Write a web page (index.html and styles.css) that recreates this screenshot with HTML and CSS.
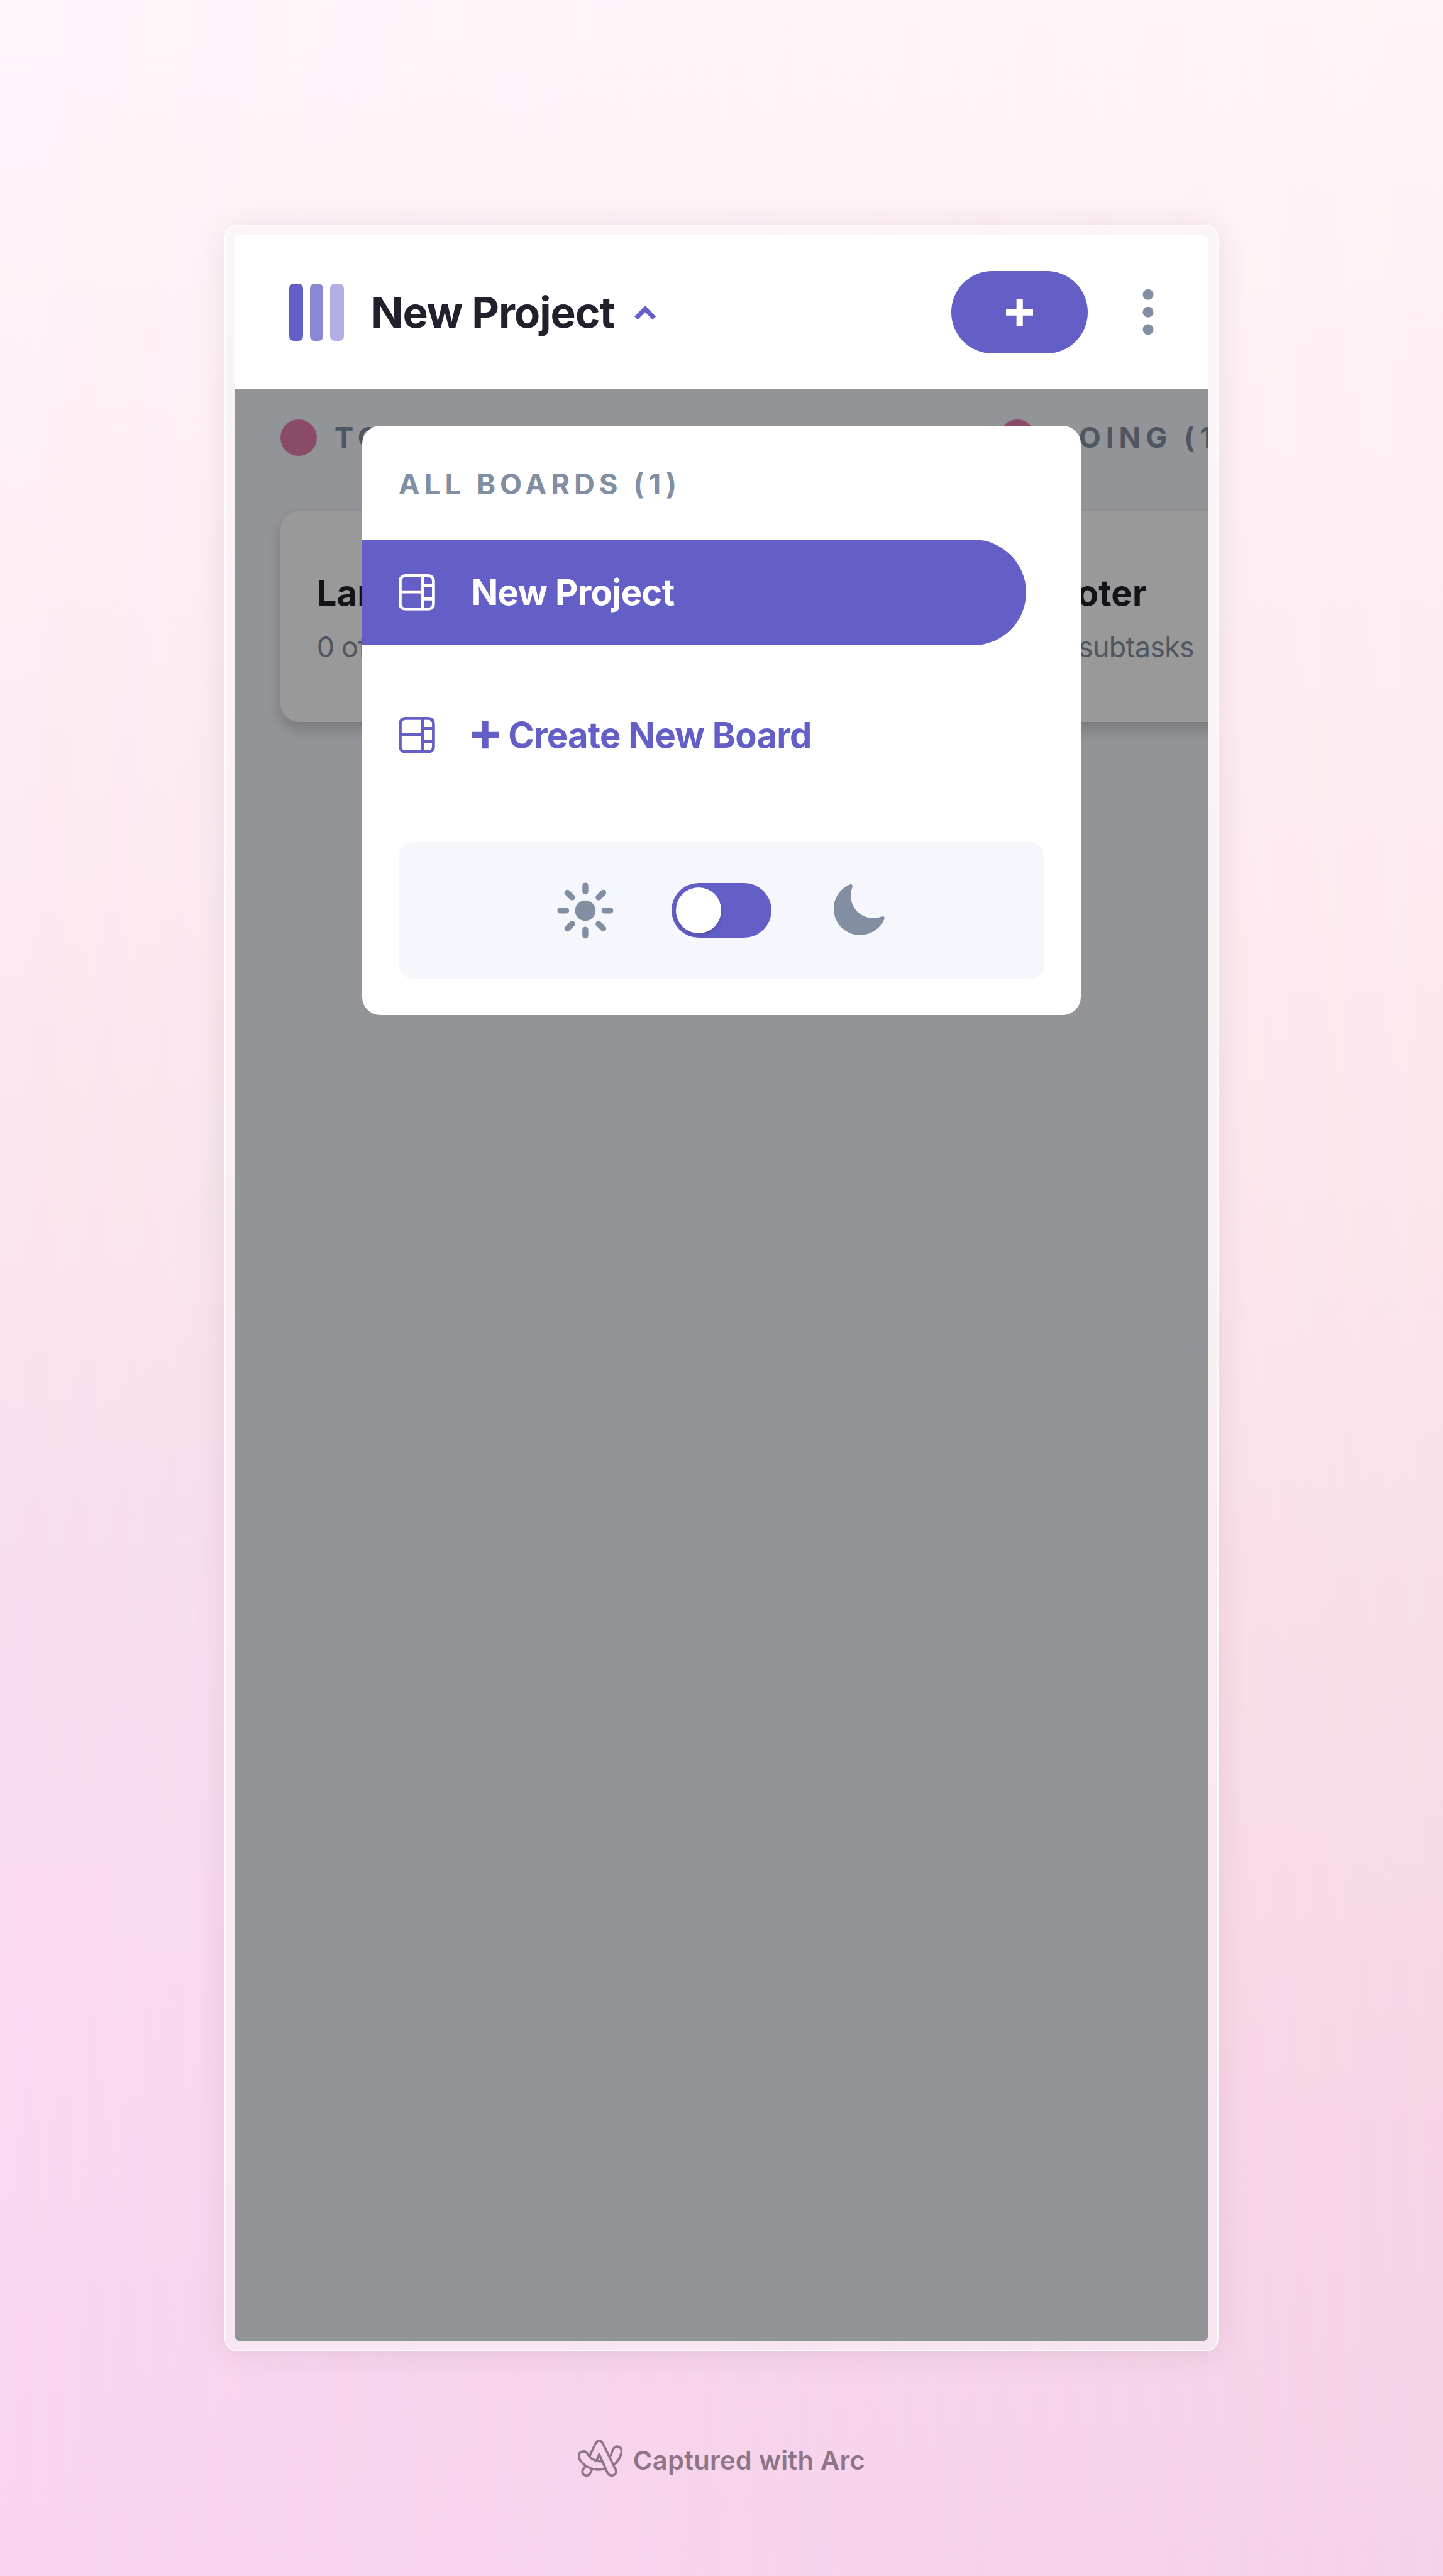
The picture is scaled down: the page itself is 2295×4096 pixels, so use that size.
FILE: index.html
```html
<!DOCTYPE html>
<html lang="en">
<head>
<meta charset="utf-8">
<title>Kanban</title>
<link rel="stylesheet" href="styles.css">
</head>
<body class="page">
<svg width="0" height="0" class="sprites" aria-hidden="true">
  <symbol id="board" viewBox="0 0 16 16"><path d="M0 2.889A2.889 2.889 0 0 1 2.889 0H13.11A2.889 2.889 0 0 1 16 2.889V13.11A2.888 2.888 0 0 1 13.111 16H2.89A2.889 2.889 0 0 1 0 13.111V2.89Zm1.333 5.555v4.667c0 .859.697 1.556 1.556 1.556h6.889V8.444H1.333Zm8.445-1.333V1.333h-6.89A1.556 1.556 0 0 0 1.334 2.89V7.11h8.445Zm4.889-1.333H11.11v4.444h3.556V5.778Zm0 5.778H11.11v3.11h2a1.556 1.556 0 0 0 1.556-1.555v-1.555Zm0-7.112V2.89a1.555 1.555 0 0 0-1.556-1.556h-2v3.111h3.556Z"/></symbol>
  <symbol id="plus" viewBox="0 0 12 12"><path d="M4.600 0h2.800v4.600H12v2.800H7.400V12h-2.800V7.400H0v-2.800h4.600z"/></symbol>
</svg>

<main class="frame">
  <div class="screen">
    <header class="topbar">
      <div class="logo"><span class="logo-bar"></span><span class="logo-bar logo-bar-mid"></span><span class="logo-bar logo-bar-light"></span></div>
      <h1 class="title">New Project</h1>
      <svg class="chevron" viewBox="0 0 10 7"><path d="M9 6 5 2 1 6" fill="none" stroke="currentColor" stroke-width="2"/></svg>
      <button class="add" aria-label="Add task"><svg class="plus"><use href="#plus"/></svg></button>
      <svg class="dots" viewBox="0 0 5 20"><circle cx="2.5" cy="2.308" r="2.350"/><circle cx="2.5" cy="10" r="2.350"/><circle cx="2.5" cy="17.692" r="2.350"/></svg>
    </header>

    <section class="board">
      <div class="columns">
        <div class="column">
          <h2 class="column-head"><span class="dot"></span>TODO (1)</h2>
          <article class="card">
            <h3 class="card-title">Landing page</h3>
            <p class="card-sub">0 of 0 subtasks</p>
          </article>
        </div>
        <div class="column">
          <h2 class="column-head"><span class="dot"></span>DOING (1)</h2>
          <article class="card">
            <h3 class="card-title">Footer</h3>
            <p class="card-sub card-sub-out">0 of 0 subtasks</p>
          </article>
        </div>
      </div>

      <div class="scrim"></div>

      <nav class="menu">
        <h2 class="menu-head">ALL BOARDS (1)</h2>
        <a class="item item-active"><svg class="board-icon"><use href="#board"/></svg><span class="item-text">New Project</span></a>
        <a class="item"><svg class="board-icon"><use href="#board"/></svg><svg class="plus"><use href="#plus"/></svg><span class="item-text item-text-new">Create New Board</span></a>
        <div class="theme">
          <svg class="theme-icon" viewBox="-13.25 -13.25 26.5 26.5">
            <circle r="4.500"/>
            <path fill="none" stroke="currentColor" stroke-width="2.6" stroke-linecap="round" d="M0-11V-8.400M0 8.400V11M-11 0H-8.400M8.400 0H11M-7.900-7.900-5.800-5.800M7.900-7.900 5.800-5.800M-7.900 7.900-5.800 5.800M7.900 7.900 5.800 5.800"/>
          </svg>
          <span class="switch"><span class="knob"></span></span>
          <svg class="theme-icon" viewBox="0 0 24 24"><path d="M9.528 1.718a.75.75 0 0 1 .162.819A8.970 8.970 0 0 0 9 6a9 9 0 0 0 9 9 8.970 8.970 0 0 0 3.463-.69.75.75 0 0 1 .981.98 10.503 10.503 0 0 1-9.694 6.460c-5.799 0-10.500-4.701-10.500-10.500 0-4.368 2.667-8.112 6.460-9.694a.75.75 0 0 1 .818.162Z"/></svg>
        </div>
      </nav>
    </section>
  </div>
</main>

<footer class="credit">
  <svg class="arc" viewBox="45 57 222 184"><path d="M104 137 133 76Q151 47 169 76L233 207Q240 228 220 234 200 238 192 222L151 130 138 160M182 201Q100 220 56 158 42 136 56 122 74 108 90 122 112 165 165 165M83 188 70 206Q62 226 80 234 100 238 106 224L116 203M207 138 219 106Q228 88 246 92 265 98 261 122 252 160 222 184"/></svg>
  <span class="credit-text">Captured with Arc</span>
</footer>
</body>
</html>
```
FILE: styles.css
```css
/* 1rem = 10 units of the 428-unit wide phone screen */
html {
  font-size: 36.1715px;
}

*, *::before {
  box-sizing: border-box;
  margin: 0;
  padding: 0;
}

.page {
  position: relative;
  display: flex;
  flex-direction: column;
  align-items: center;
  height: 4096px;
  padding-top: 9.867rem;
  overflow: hidden;
  font-family: Inter, "Liberation Sans", sans-serif;
  background: linear-gradient(#fff6fb 0%, #fdedf4 25%, #fae4ee 48%, #f9deef 60%, #fadaf1 75%, #f9d4f0 100%);
}

.page::before {
  content: "";
  position: absolute;
  inset: 0;
  background: linear-gradient(#fff4f7 0%, #fdedf2 25%, #fbe7ec 45%, #f9dde7 65%, #f7d5e6 82%, #f5d2e8 100%);
  -webkit-mask-image: linear-gradient(to right, transparent, #000);
  mask-image: linear-gradient(to right, transparent, #000);
}

.sprites {
  position: absolute;
}

svg {
  display: block;
  flex: none;
  fill: currentColor;
}

.frame {
  position: relative;
  padding: 0.403rem;
  border: 2px solid rgba(255, 255, 255, 0.7);
  border-radius: 0.57rem;
  background: rgba(247, 247, 248, 0.52);
  box-shadow: 0 0.1rem 1.4rem rgba(50, 20, 45, 0.09);
}

.screen {
  display: flex;
  flex-direction: column;
  width: 42.8rem;
  height: 92.6rem;
  border-radius: 0.3rem;
  overflow: hidden;
  background: #fff;
}

/* Top bar */
.topbar {
  display: flex;
  align-items: center;
  height: 6.8rem;
  padding: 0 2.4rem;
}

.logo {
  display: flex;
  gap: 0.3rem;
}

.logo-bar {
  width: 0.6rem;
  height: 2.5rem;
  border-radius: 0.2rem;
  background: #635fc7;
}

.logo-bar-mid {
  opacity: 0.75;
}

.logo-bar-light {
  opacity: 0.5;
}

.title {
  margin-left: 1.19rem;
  font-size: 1.87rem;
  font-weight: 700;
  letter-spacing: -0.029rem;
  color: #20212c;
}

.chevron {
  width: 1rem;
  height: 0.7rem;
  margin-left: 0.86rem;
  color: #635fc7;
}

.add {
  display: flex;
  align-items: center;
  justify-content: center;
  width: 6rem;
  height: 3.6rem;
  margin-left: auto;
  border: 0;
  border-radius: 1.8rem;
  background: #635fc7;
  color: #fff;
}

.plus {
  width: 1.2rem;
  height: 1.2rem;
}

.dots {
  width: 0.5rem;
  height: 2rem;
  margin-left: 2.4rem;
  color: #828fa3;
}

/* Board behind the menu */
.board {
  position: relative;
  flex: 1;
  background: #f4f7fd;
}

.columns {
  display: flex;
  gap: 3.6rem;
  padding: 1.12rem 2rem 0;
}

.column {
  flex: none;
  width: 28rem;
}

.column-head,
.menu-head {
  font-size: 1.26rem;
  font-weight: 700;
  line-height: 2rem;
  letter-spacing: 0.192rem;
  color: #828fa3;
}

.column-head {
  display: flex;
  align-items: center;
  gap: 0.78rem;
  margin-bottom: 2.24rem;
  letter-spacing: 0.22rem;
  white-space: nowrap;
}

.dot {
  width: 1.6rem;
  height: 1.6rem;
  border-radius: 50%;
  background: #e67daf;
}

.card {
  height: 9.26rem;
  padding: 2.58rem 1.6rem 0;
  border-radius: 0.8rem;
  background: #fff;
  box-shadow: 0 0.3rem 0.6rem rgba(20, 20, 25, 0.2);
}

.card-title {
  font-size: 1.55rem;
  line-height: 2rem;
  letter-spacing: 0.005rem;
  color: #20212c;
}

.card-sub {
  margin-top: 0.6rem;
  font-size: 1.24rem;
  line-height: 1.6rem;
  letter-spacing: -0.02rem;
  color: #828fa3;
}

.card-sub-out {
  margin-left: -1.78rem;
}

.scrim {
  position: absolute;
  inset: 0;
  background: rgba(0, 0, 0, 0.4);
}

/* Board menu */
.menu {
  position: absolute;
  top: 1.6rem;
  left: 5.6rem;
  display: flex;
  flex-direction: column;
  width: 31.6rem;
  height: 25.9rem;
  padding-top: 1.57rem;
  border-radius: 0.8rem;
  background: #fff;
}

.menu-head {
  margin: 0 1.6rem 1.43rem;
}

.item {
  display: flex;
  align-items: center;
  width: 29.2rem;
  height: 4.64rem;
  margin-bottom: 1.64rem;
  padding-left: 1.6rem;
  border-radius: 0 2.32rem 2.32rem 0;
  color: #635fc7;
}

.item-active {
  background: #635fc7;
  color: #fff;
}

.board-icon {
  width: 1.6rem;
  height: 1.6rem;
  margin-right: 1.6rem;
}

.item-text {
  font-size: 1.55rem;
  font-weight: 700;
  letter-spacing: -0.019rem;
  white-space: nowrap;
}

.item-text-new {
  margin-left: 0.42rem;
}

.theme {
  display: flex;
  align-items: center;
  justify-content: center;
  gap: 2.475rem;
  height: 6rem;
  margin: 0.74rem 1.6rem 0;
  border-radius: 0.6rem;
  background: #f5f7fd;
  color: #828fa3;
}

.theme-icon {
  width: 2.65rem;
  height: 2.65rem;
}

.switch {
  width: 4.4rem;
  height: 2.4rem;
  padding: 0.2rem;
  border-radius: 1.2rem;
  background: #635fc7;
}

.knob {
  display: block;
  width: 2rem;
  height: 2rem;
  border-radius: 50%;
  background: #fff;
  box-shadow: 0 0.1rem 0.2rem rgba(0, 0, 0, 0.15);
}

/* Credit line */
.credit {
  position: relative;
  display: flex;
  align-items: center;
  gap: 0.46rem;
  margin-top: 3.87rem;
  color: #8d7586;
}

.arc {
  width: 1.97rem;
  height: 1.64rem;
  fill: none;
  stroke: currentColor;
  stroke-width: 11.5;
  stroke-linejoin: round;
}

.credit-text {
  padding-top: 0.15rem;
  font-size: 1.15rem;
  font-weight: 600;
  line-height: 1.4rem;
  letter-spacing: 0.009rem;
}
```
